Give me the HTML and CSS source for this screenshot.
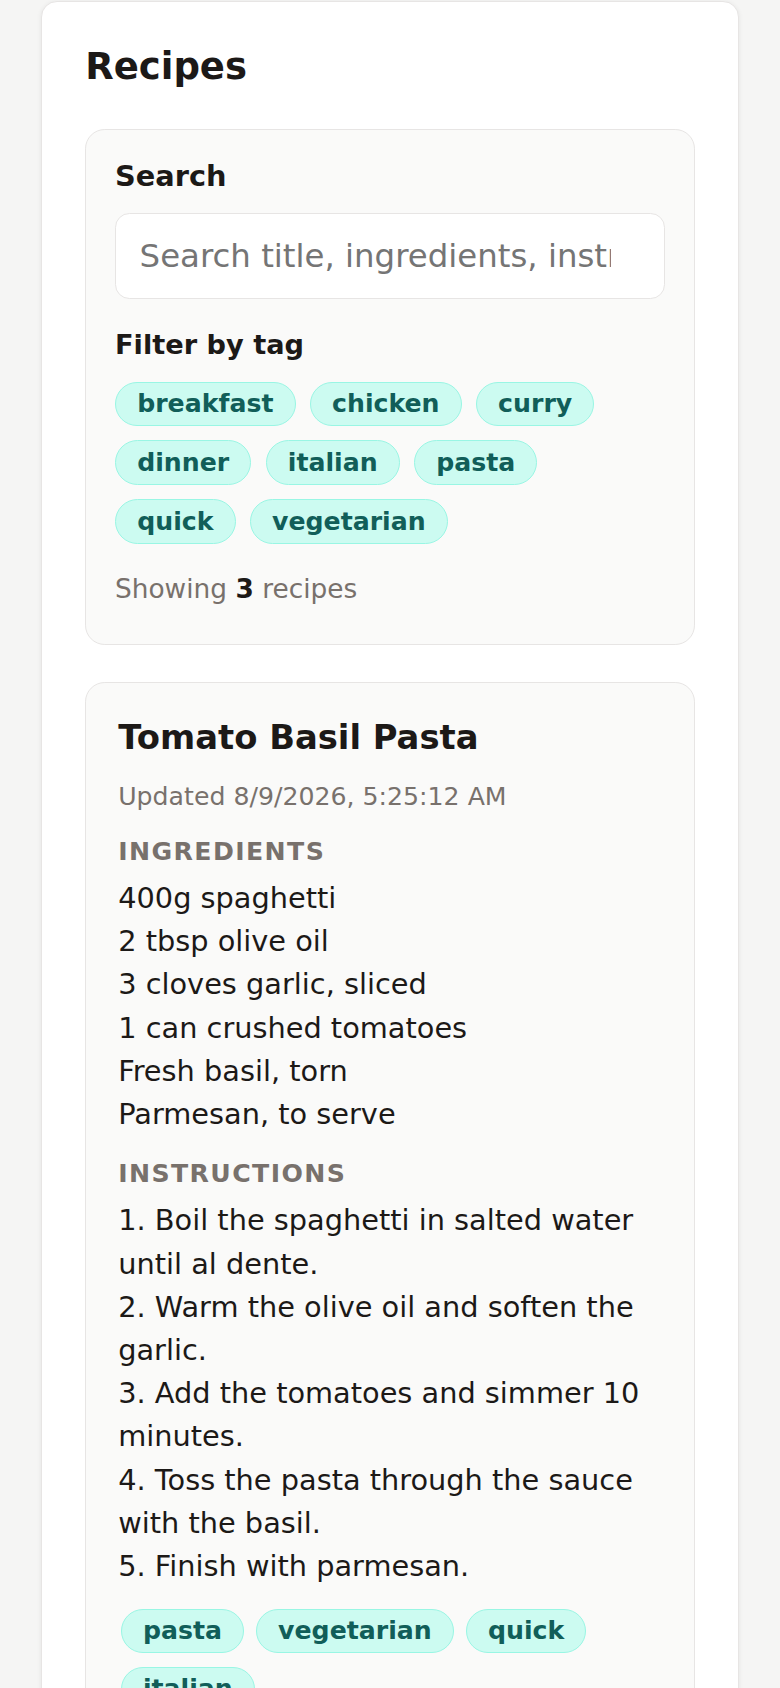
FILE: index.html
```html
<!DOCTYPE html>
<html lang="en">
<head>
<meta charset="utf-8">
<meta name="viewport" content="width=device-width, initial-scale=1">
<title>Recipes</title>
<link rel="stylesheet" href="styles.css">
</head>
<body>
<main class="page">
  <section class="app">
    <h1 class="app-title">Recipes</h1>

    <div class="filters">
      <div class="field">
        <label class="label" for="q">Search</label>
        <input class="search" id="q" type="text" placeholder="Search title, ingredients, instructions">
      </div>
      <p class="label label-tags">Filter by tag</p>
      <div class="tag-list">
        <button class="tag" type="button">breakfast</button>
        <button class="tag" type="button">chicken</button>
        <button class="tag" type="button">curry</button>
        <button class="tag" type="button">dinner</button>
        <button class="tag" type="button">italian</button>
        <button class="tag" type="button">pasta</button>
        <button class="tag" type="button">quick</button>
        <button class="tag" type="button">vegetarian</button>
      </div>
      <p class="count">Showing <strong>3</strong> recipes</p>
    </div>

    <div class="recipes">
      <article class="recipe">
        <h2 class="recipe-title">Tomato Basil Pasta</h2>
        <p class="updated">Updated 8/9/2026, 5:25:12 AM</p>
        <h3 class="section-title">Ingredients</h3>
        <ul class="ingredients">
          <li>400g spaghetti</li>
          <li>2 tbsp olive oil</li>
          <li>3 cloves garlic, sliced</li>
          <li>1 can crushed tomatoes</li>
          <li>Fresh basil, torn</li>
          <li>Parmesan, to serve</li>
        </ul>
        <h3 class="section-title section-gap">Instructions</h3>
        <div class="instructions">1. Boil the spaghetti in salted water until al dente.
2. Warm the olive oil and soften the garlic.
3. Add the tomatoes and simmer 10 minutes.
4. Toss the pasta through the sauce with the basil.
5. Finish with parmesan.</div>
        <div class="recipe-tags">
          <span class="tag">pasta</span>
          <span class="tag">vegetarian</span>
          <span class="tag">quick</span>
          <span class="tag">italian</span>
        </div>
      </article>
    </div>
  </section>
</main>
</body>
</html>
```

FILE: styles.css
```css
* {
  box-sizing: border-box;
}

html,
body {
  margin: 0;
  padding: 0;
}

body {
  background: #f5f5f4;
  color: #1c1917;
  font-family: "DejaVu Sans", "Noto Sans", sans-serif;
  font-size: 28.8px;
  line-height: 43.2px;
}

.page {
  padding: 1px 41px 60px;
}

.app {
  background: #ffffff;
  border: 1.8px solid #e7e5e4;
  border-radius: 16px;
  padding: 43.2px;
  box-shadow: 0 1.8px 5.4px rgba(28, 25, 23, 0.07);
}

.app-title {
  margin: 0 0 41px;
  font-size: 37px;
  line-height: 43.2px;
  font-weight: 700;
}

.filters {
  background: #fafaf9;
  border: 1.8px solid #e7e5e4;
  border-radius: 19.8px;
  padding: 28.8px 28.8px 31px;
}

.field {
  margin-bottom: 28.8px;
}

.label {
  display: block;
  margin: 0 0 19px;
  font-size: 28.8px;
  line-height: 34.56px;
  font-weight: 700;
}

.label-tags {
  font-size: 27.2px;
}

.search {
  display: block;
  width: 100%;
  height: 86.4px;
  margin: 0;
  padding: 0 53px 0 23.6px;
  border: 1.8px solid #e7e5e4;
  border-radius: 14.4px;
  background: #ffffff;
  color: #1c1917;
  font-family: "DejaVu Sans", "Noto Sans", sans-serif;
  font-size: 32.4px;
  outline: none;
}

.search::placeholder {
  color: #757575;
  opacity: 1;
}

.tag-list {
  display: flex;
  flex-wrap: wrap;
  gap: 14px 14.2px;
}

.tag {
  display: inline-block;
  margin: 0;
  padding: 6.7px 21.2px;
  border: 1.8px solid #99f6e4;
  border-radius: 999px;
  background: #ccfbf1;
  color: #115e59;
  font-family: "DejaVu Sans", "Noto Sans", sans-serif;
  font-size: 25.2px;
  line-height: 29.3px;
  font-weight: 700;
}

.count {
  margin: 25.4px 0 4.4px;
  color: #78716c;
  font-size: 26.4px;
  line-height: 39.6px;
}

.count strong {
  color: #1c1917;
  font-weight: 700;
}

.recipes {
  margin-top: 37.3px;
}

.recipe {
  background: #fafaf9;
  border: 1.8px solid #e7e5e4;
  border-radius: 19.8px;
  padding: 28.8px 32px;
}

.recipe-title {
  margin: 0;
  font-size: 33.8px;
  line-height: 51px;
  font-weight: 700;
}

.updated {
  margin: 15.3px 0 0;
  color: #78716c;
  font-size: 25.2px;
  line-height: 37.8px;
}

.section-title {
  margin: 17.3px 0 5.8px;
  color: #78716c;
  font-size: 25.2px;
  line-height: 37.8px;
  font-weight: 700;
  letter-spacing: 1.4px;
  text-transform: uppercase;
}

.section-gap {
  margin-top: 18.8px;
  margin-bottom: 6.6px;
}

.ingredients {
  margin: 0;
  padding: 0;
  list-style: none;
}

.instructions {
  white-space: pre-line;
}

.recipe-tags {
  display: flex;
  flex-wrap: wrap;
  gap: 13.4px 11.8px;
  margin-top: 20.4px;
  padding-left: 2.5px;
}
```
